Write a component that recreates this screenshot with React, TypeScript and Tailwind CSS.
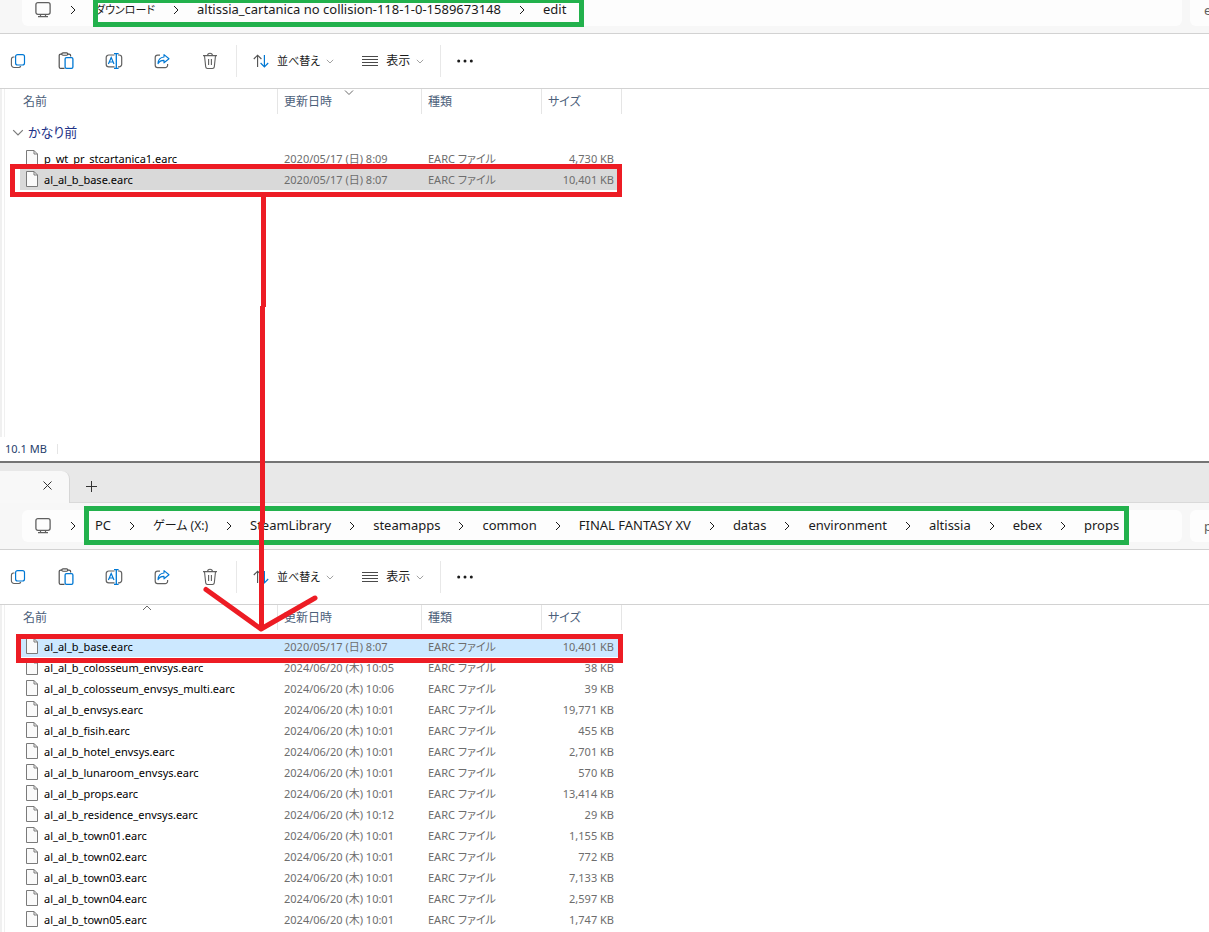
import { Fragment, type ReactNode } from 'react'
import clsx from 'clsx'

type FileRow = {
  name: string
  date: string
  size: string
}

type Crumb = {
  label: string
  className?: string
}

const downloadCrumbs: Crumb[] = [
  { label: 'ダウンロード', className: 'text-[11px]' },
  { label: 'altissia_cartanica no collision-118-1-0-1589673148' },
  { label: 'edit' },
]

const gameCrumbs: Crumb[] = [
  { label: 'PC' },
  { label: 'ゲーム (X:)', className: 'text-xs' },
  { label: 'SteamLibrary' },
  { label: 'steamapps' },
  { label: 'common' },
  { label: 'FINAL FANTASY XV' },
  { label: 'datas' },
  { label: 'environment' },
  { label: 'altissia' },
  { label: 'ebex' },
  { label: 'props' },
]

const downloadFiles: FileRow[] = [
  { name: 'p_wt_pr_stcartanica1.earc', date: '2020/05/17 (日) 8:09', size: '4,730 KB' },
  { name: 'al_al_b_base.earc', date: '2020/05/17 (日) 8:07', size: '10,401 KB' },
]

const gameFiles: FileRow[] = [
  { name: 'al_al_b_base.earc', date: '2020/05/17 (日) 8:07', size: '10,401 KB' },
  { name: 'al_al_b_colosseum_envsys.earc', date: '2024/06/20 (木) 10:05', size: '38 KB' },
  { name: 'al_al_b_colosseum_envsys_multi.earc', date: '2024/06/20 (木) 10:06', size: '39 KB' },
  { name: 'al_al_b_envsys.earc', date: '2024/06/20 (木) 10:01', size: '19,771 KB' },
  { name: 'al_al_b_fisih.earc', date: '2024/06/20 (木) 10:01', size: '455 KB' },
  { name: 'al_al_b_hotel_envsys.earc', date: '2024/06/20 (木) 10:01', size: '2,701 KB' },
  { name: 'al_al_b_lunaroom_envsys.earc', date: '2024/06/20 (木) 10:01', size: '570 KB' },
  { name: 'al_al_b_props.earc', date: '2024/06/20 (木) 10:01', size: '13,414 KB' },
  { name: 'al_al_b_residence_envsys.earc', date: '2024/06/20 (木) 10:12', size: '29 KB' },
  { name: 'al_al_b_town01.earc', date: '2024/06/20 (木) 10:01', size: '1,155 KB' },
  { name: 'al_al_b_town02.earc', date: '2024/06/20 (木) 10:01', size: '772 KB' },
  { name: 'al_al_b_town03.earc', date: '2024/06/20 (木) 10:01', size: '7,133 KB' },
  { name: 'al_al_b_town04.earc', date: '2024/06/20 (木) 10:01', size: '2,597 KB' },
  { name: 'al_al_b_town05.earc', date: '2024/06/20 (木) 10:01', size: '1,747 KB' },
]

function Chevron({ dir, className }: { dir: 'right' | 'down' | 'up'; className?: string }) {
  const d = {
    right: 'M3 1 L7 5 L3 9',
    down: 'M1 3.5 L5 7.5 L9 3.5',
    up: 'M1 7 L5 3 L9 7',
  }[dir]
  return (
    <svg viewBox="0 0 10 10" fill="none" stroke="currentColor" className={className} aria-hidden="true">
      <path d={d} />
    </svg>
  )
}

function MonitorIcon() {
  return (
    <svg viewBox="0 0 16 16" fill="none" className="size-4 text-[#606060]" aria-hidden="true">
      <rect x="0.9" y="0.7" width="14.2" height="11.6" rx="2" stroke="currentColor" strokeWidth="1.3" />
      <path d="M5.5 12.5v2M10.5 12.5v2M3 14.7h10" stroke="currentColor" strokeWidth="1.2" />
    </svg>
  )
}

function FileIcon() {
  return (
    <svg viewBox="0 0 12 16" className="mt-0.5 h-4 w-3 shrink-0" aria-hidden="true">
      <path d="M0.5 0.5h7.5l3.5 3.5v11.5h-11z" fill="#fafafa" stroke="#7a7a7a" />
      <path d="M8 0.5v3.5h3.5" fill="none" stroke="#7a7a7a" />
    </svg>
  )
}

function CopyIcon() {
  return (
    <svg viewBox="0 0 16 16" fill="none" className="size-4" aria-hidden="true">
      <path d="M4.5 4H3.6A2.4 2.4 0 0 0 1.4 6.4v5.4A2.7 2.7 0 0 0 4.1 14.5h4.4A2.3 2.3 0 0 0 10.8 13" stroke="#606060" strokeWidth="1.1" />
      <rect x="5.6" y="1.6" width="8.9" height="10.4" rx="2" stroke="#0078d4" strokeWidth="1.2" fill="#fff" />
    </svg>
  )
}

function PasteIcon() {
  return (
    <svg viewBox="0 0 16 18" fill="none" className="h-[18px] w-4" aria-hidden="true">
      <path d="M6.5 16.4H2.7A1.5 1.5 0 0 1 1.2 15V3.6A1.5 1.5 0 0 1 2.7 2.1H4M9.5 2.1h1.6a1.5 1.5 0 0 1 1.5 1.5v1" stroke="#505050" strokeWidth="1.2" />
      <rect x="3.8" y="0.9" width="6" height="2.4" rx="1.2" stroke="#505050" strokeWidth="1.1" />
      <rect x="7.1" y="5.7" width="7.8" height="10.7" rx="1.4" stroke="#0078d4" strokeWidth="1.3" fill="#fff" />
    </svg>
  )
}

function RenameIcon() {
  return (
    <svg viewBox="0 0 18 16" fill="none" className="h-4 w-[18px]" aria-hidden="true">
      <path d="M9.5 2H3.8A2.6 2.6 0 0 0 1.2 4.6v6.6A2.6 2.6 0 0 0 3.8 13.8h5.7M13 2h1.1a2.6 2.6 0 0 1 2.6 2.6v6.6a2.6 2.6 0 0 1-2.6 2.6H13" stroke="#606060" strokeWidth="1.2" />
      <path d="M9 0.7h4.6M9 15.3h4.6M11.3 0.7v14.6" stroke="#0078d4" strokeWidth="1.3" />
      <path d="M3.4 11 L6.2 4.6 L9 11 M4.4 9h3.6" stroke="#0078d4" strokeWidth="1.2" />
    </svg>
  )
}

function ShareIcon() {
  return (
    <svg viewBox="0 0 16 16" fill="none" className="size-4" aria-hidden="true">
      <path d="M6 2.2H3.6A2.4 2.4 0 0 0 1.2 4.6v7.6a2.4 2.4 0 0 0 2.4 2.4h7.6a2.4 2.4 0 0 0 2.4-2.4V11" stroke="#606060" strokeWidth="1.2" />
      <path d="M10 1.6 L15 5.7 L10 9.8 V7.4 C7 7.3 5.3 8.4 4 10.6 C4.2 6.9 6.2 4.3 10 4 Z" stroke="#0078d4" strokeWidth="1.1" strokeLinejoin="round" />
    </svg>
  )
}

function TrashIcon() {
  return (
    <svg viewBox="0 0 16 18" fill="none" stroke="#606060" strokeWidth="1.1" className="h-[18px] w-4" aria-hidden="true">
      <path d="M1 3.6h14M5.6 3.4a2.4 2.2 0 0 1 4.8 0M2.5 3.8l1.2 11.1a1.8 1.8 0 0 0 1.8 1.6h5a1.8 1.8 0 0 0 1.8-1.6l1.2-11.1M6.6 7v6M9.4 7v6" />
    </svg>
  )
}

function SortIcon() {
  return (
    <svg viewBox="0 0 16 14" fill="none" className="h-3.5 w-4" aria-hidden="true">
      <path d="M4.6 13V1.2M0.8 5 L4.6 1.2 L8.4 5" stroke="#505050" strokeWidth="1.1" />
      <path d="M11.4 1v11.8M7.6 9 L11.4 12.8 L15.2 9" stroke="#0078d4" strokeWidth="1.2" />
    </svg>
  )
}

function LinesIcon() {
  return (
    <svg viewBox="0 0 16 12" stroke="#4a4a4a" className="h-3 w-4" aria-hidden="true">
      <path d="M0 1.5h16M0 4.5h16M0 7.5h16M0 10.5h16" />
    </svg>
  )
}

function DotsIcon() {
  return (
    <svg viewBox="0 0 16 4" fill="#1b1b1b" className="h-1 w-4" aria-hidden="true">
      <circle cx="1.7" cy="2" r="1.5" />
      <circle cx="8" cy="2" r="1.5" />
      <circle cx="14.3" cy="2" r="1.5" />
    </svg>
  )
}

function IconButton({ label, children }: { label: string; children: ReactNode }) {
  return (
    <button type="button" aria-label={label} className="flex size-9 items-center justify-center">
      {children}
    </button>
  )
}

function AddressBar({ crumbs, frameClass, search }: { crumbs: Crumb[]; frameClass: string; search: string }) {
  return (
    <div className="flex gap-2 border-b border-[#d2d2d2] bg-[#f7f7f7] py-[7px] pl-[22px] text-[13px] text-[#1b1b1b]">
      <div className="flex h-8 min-w-0 flex-1 items-center rounded-md bg-[#fdfdfd] pl-[13px]">
        <MonitorIcon />
        <Chevron dir="right" className="mr-[17px] ml-[17px] size-2.5" />
        <nav aria-label="パス" className="relative flex h-8 items-center whitespace-nowrap">
          {crumbs.map((crumb, i) => (
            <Fragment key={crumb.label}>
              {i > 0 && (
                <span className="flex w-[42px] justify-center">
                  <Chevron dir="right" className="size-2.5" />
                </span>
              )}
              <a href="#" className={crumb.className}>
                {crumb.label}
              </a>
            </Fragment>
          ))}
          <span className={clsx('pointer-events-none absolute border-[5px] border-[#22b14c]', frameClass)} />
        </nav>
      </div>
      <input
        aria-label="検索"
        placeholder={search}
        className="h-8 w-[19px] rounded-l-md bg-[#fdfdfd] pl-3.5 placeholder:text-[#5f5f5f]"
      />
    </div>
  )
}

function Toolbar() {
  return (
    <div className="flex h-[55px] items-center border-b border-[#d2d2d2] bg-white text-xs text-[#1b1b1b]">
      <div className="flex gap-3">
        <IconButton label="コピー">
          <CopyIcon />
        </IconButton>
        <IconButton label="貼り付け">
          <PasteIcon />
        </IconButton>
        <IconButton label="名前の変更">
          <RenameIcon />
        </IconButton>
        <IconButton label="共有">
          <ShareIcon />
        </IconButton>
        <IconButton label="削除">
          <TrashIcon />
        </IconButton>
      </div>
      <span className="ml-2 h-8 w-px bg-[#e8e8e8]" />
      <button type="button" className="ml-4 flex h-9 items-center">
        <SortIcon />
        <span className="mr-1.5 ml-2 text-[11px]">並べ替え</span>
        <Chevron dir="down" className="size-2 text-[#8a8a8a]" />
      </button>
      <button type="button" className="ml-7 flex h-9 items-center">
        <LinesIcon />
        <span className="mr-1.5 ml-2">表示</span>
        <Chevron dir="down" className="size-2 text-[#8a8a8a]" />
      </button>
      <span className="mr-1.5 ml-4 h-8 w-px bg-[#e8e8e8]" />
      <IconButton label="その他">
        <DotsIcon />
      </IconButton>
    </div>
  )
}

type FileTableProps = {
  files: FileRow[]
  sortedBy: 'name' | 'date'
  group?: string
  selectedClass: string
  frameClass: string
}

function FileTable({ files, sortedBy, group, selectedClass, frameClass }: FileTableProps) {
  const headCell = 'relative border-r border-[#e5e5e5] pl-1.5 text-left font-normal'
  return (
    <table className="ml-[15px] w-[602px] table-fixed border-separate border-spacing-0 text-[11px] leading-[21px]">
      <thead className="text-xs text-[#4c607a]">
        <tr className="h-[25px]">
          <th className={clsx(headCell, 'w-[258px] !pl-[3px]')}>
            名前
            {sortedBy === 'name' && <Chevron dir="up" className="absolute -top-0.5 left-[122px] size-2.5 text-[#6a6a6a]" />}
          </th>
          <th className={clsx(headCell, 'w-36')}>
            更新日時
            {sortedBy === 'date' && <Chevron dir="down" className="absolute -top-0.5 left-[66px] size-2.5 text-[#6a6a6a]" />}
          </th>
          <th className={clsx(headCell, 'w-[120px]')}>種類</th>
          <th className={headCell}>サイズ</th>
        </tr>
      </thead>
      <tbody className="text-[#6d6d6d]">
        <tr className={group ? 'h-[34px]' : 'h-1.5'}>
          <td colSpan={4} className="p-0 text-[13px] leading-none text-[#1e3287]">
            {group && (
              <button type="button" className="-ml-2 flex items-center gap-1 pt-0.5">
                <Chevron dir="down" className="size-3 text-[#7a7a7a]" />
                {group}
              </button>
            )}
          </td>
        </tr>
        {files.map((file) => {
          const selected = file.name === 'al_al_b_base.earc'
          return (
            <tr key={file.name} className={clsx('relative h-[21px]', selected && selectedClass)}>
              <td className="p-0 pl-1.5">
                <div className="flex items-start gap-1.5 text-black">
                  <FileIcon />
                  {file.name}
                </div>
                {selected && (
                  <span className={clsx('pointer-events-none absolute z-10 border-[5px] border-[#ed1c24]', frameClass)} />
                )}
              </td>
              <td className="p-0 pl-1.5">{file.date}</td>
              <td className="p-0 pl-1.5">EARC ファイル</td>
              <td className="p-0 pr-2 text-right">{file.size}</td>
            </tr>
          )
        })}
      </tbody>
    </table>
  )
}

function TabStrip() {
  return (
    <div className="box-content flex h-10 items-end border-t-2 border-[#747474] bg-[#e8e8e8]">
      <div className="flex h-8 w-[70px] items-center justify-end rounded-tr-lg border-r border-[#d6d6d6] bg-[#f8f8f8] pr-[15px] pb-1">
        <button type="button" aria-label="タブを閉じる" className="p-0.5">
          <svg viewBox="0 0 9 9" stroke="#333" className="size-[9px]" aria-hidden="true">
            <path d="M0.5 0.5l8 8M8.5 0.5l-8 8" />
          </svg>
        </button>
      </div>
      <div className="flex h-8 flex-1 items-center border-b border-[#d9d9d9] pl-3.5">
        <button type="button" aria-label="新しいタブ" className="p-0.5">
          <svg viewBox="0 0 11 11" stroke="#333" className="size-[11px]" aria-hidden="true">
            <path d="M5.5 0v11M0 5.5h11" />
          </svg>
        </button>
      </div>
    </div>
  )
}

function Arrow() {
  return (
    <svg
      viewBox="0 0 120 440"
      fill="none"
      stroke="#ed1c24"
      strokeWidth="5"
      className="pointer-events-none absolute top-[195px] left-[201px] z-20 h-[440px] w-[120px]"
      aria-hidden="true"
    >
      <path d="M62.5 2V112M61.5 111V328M60.5 327V432" />
      <path d="M5 394.5L60 434L114 403" strokeLinecap="round" strokeLinejoin="round" />
    </svg>
  )
}

export default function App() {
  return (
    <main className="relative flex min-h-screen flex-col overflow-hidden bg-white font-['Noto_Sans','Noto_Sans_CJK_JP',sans-serif] [font-feature-settings:'palt']">
      <section className="-mt-[13px]">
        <AddressBar crumbs={downloadCrumbs} frameClass="-left-0.5 -right-[18px] top-1 -bottom-px" search="e" />
        <Toolbar />
        <div className="min-h-[348px] border-l-2 border-[#f0f0f0]">
          <div className="ml-0.5 min-h-[348px] border-l border-[#f0f0f0]">
            <FileTable
              files={downloadFiles}
              sortedBy="date"
              group="かなり前"
              selectedClass="bg-[#d9d9d9]"
              frameClass="-left-2.5 right-0 -top-[5px] -bottom-[7px]"
            />
          </div>
        </div>
        <footer className="flex h-6 items-center pl-[5px] text-[11px] text-[#26406b]">
          10.1 MB
          <span className="ml-2.5 h-2.5 w-px bg-[#e5e5e5]" />
        </footer>
      </section>

      <section className="flex flex-1 flex-col">
        <TabStrip />
        <AddressBar crumbs={gameCrumbs} frameClass="-left-[11px] -right-2.5 -top-1 -bottom-[3px]" search="p" />
        <Toolbar />
        <div className="flex flex-1 border-l-2 border-[#f0f0f0]">
          <div className="ml-0.5 flex-1 border-l border-[#f0f0f0]">
            <FileTable
              files={gameFiles}
              sortedBy="name"
              selectedClass="bg-[#cce8ff]"
              frameClass="-left-1 -right-px -top-0.5 -bottom-1.5"
            />
          </div>
        </div>
      </section>

      <Arrow />
    </main>
  )
}
